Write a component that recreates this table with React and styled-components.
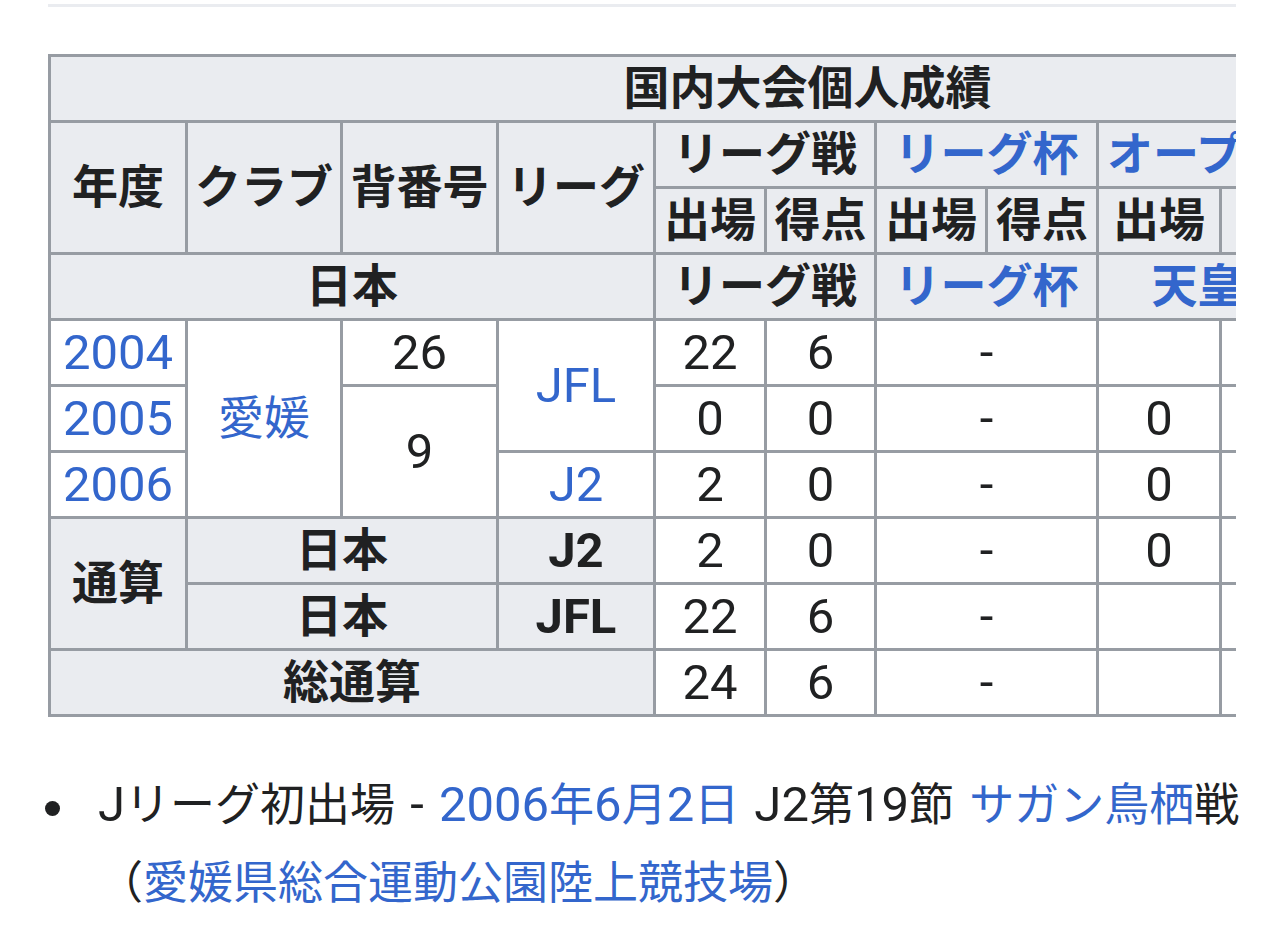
import React from "react";
import styled, { createGlobalStyle } from "styled-components";

const Global = createGlobalStyle`
  html, body { margin: 0; padding: 0; background: #ffffff; }
  body {
    font-family: Roboto, "Noto Sans CJK JP", sans-serif;
    color: #202122;
  }
`;

const Page = styled.div`
  padding: 4px 48px 0;
`;

const Rule = styled.div`
  height: 3px;
  background: #eaecf0;
`;

const Scroller = styled.div`
  margin-top: 47px;
  overflow: hidden;
`;

const Table = styled.table`
  border-collapse: collapse;
  table-layout: fixed;
  width: 1519px;
  font-size: 46px;
  color: #202122;
`;

const cellBase = `
  border: 3px solid #979ca3;
  padding: 3px 0;
  line-height: 57px;
  text-align: center;
  vertical-align: middle;
  white-space: nowrap;
  overflow: hidden;
`;

const Th = styled.th`
  ${cellBase}
  background: #eaecf0;
  font-weight: 700;
  font-size: ${(p) => (p.$latin ? "49px" : "46px")};
`;

const Td = styled.td`
  ${cellBase}
  background: #ffffff;
  font-weight: 400;
  font-size: ${(p) => (p.$latin ? "49px" : "46px")};
`;

const Link = styled.a`
  color: #3366cc;
  text-decoration: none;
`;

const List = styled.ul`
  list-style: none;
  margin: 49px 0 0;
  padding: 0;
`;

const Item = styled.li`
  display: flex;
  align-items: flex-start;
  gap: 38px;
  font-size: 45px;
  line-height: 78px;
`;

const Dot = styled.span`
  flex: none;
  width: 15px;
  height: 15px;
  margin-top: 35px;
  margin-left: -3px;
  border-radius: 50%;
  background: #202122;
`;

const ItemText = styled.div`
  white-space: nowrap;
`;

const Latin = styled.span`
  font-size: 49px;
  word-spacing: 3px;
`;

const widths = [137, 155, 156, 157, 111, 110, 111, 111, 123, 123, 111, 111];

const pairs = ["出場", "得点", "出場", "得点", "出場", "得点", "出場", "得点"];

export default function App() {
  return (
    <>
      <Global />
      <Page>
        <Rule />
        <Scroller>
          <Table>
            <colgroup>
              {widths.map((w, i) => (
                <col key={i} style={{ width: w }} />
              ))}
            </colgroup>
            <tbody>
              <tr>
                <Th colSpan={12}>国内大会個人成績</Th>
              </tr>
              <tr>
                <Th rowSpan={2}>年度</Th>
                <Th rowSpan={2}>クラブ</Th>
                <Th rowSpan={2}>背番号</Th>
                <Th rowSpan={2}>リーグ</Th>
                <Th colSpan={2}>リーグ戦</Th>
                <Th colSpan={2}>
                  <Link href="#">リーグ杯</Link>
                </Th>
                <Th colSpan={2}>
                  <Link href="#">オープン杯</Link>
                </Th>
                <Th colSpan={2}>期間通算</Th>
              </tr>
              <tr>
                {pairs.map((p, i) => (
                  <Th key={i}>{p}</Th>
                ))}
              </tr>
              <tr>
                <Th colSpan={4}>日本</Th>
                <Th colSpan={2}>リーグ戦</Th>
                <Th colSpan={2}>
                  <Link href="#">リーグ杯</Link>
                </Th>
                <Th colSpan={2}>
                  <Link href="#">天皇杯</Link>
                </Th>
                <Th colSpan={2}>期間通算</Th>
              </tr>
              <tr>
                <Td $latin>
                  <Link href="#">2004</Link>
                </Td>
                <Td rowSpan={3}>
                  <Link href="#">愛媛</Link>
                </Td>
                <Td $latin>26</Td>
                <Td $latin rowSpan={2}>
                  <Link href="#">JFL</Link>
                </Td>
                <Td $latin>22</Td>
                <Td $latin>6</Td>
                <Td $latin colSpan={2}>-</Td>
                <Td $latin></Td>
                <Td $latin></Td>
                <Td $latin>22</Td>
                <Td $latin>6</Td>
              </tr>
              <tr>
                <Td $latin>
                  <Link href="#">2005</Link>
                </Td>
                <Td $latin rowSpan={2}>9</Td>
                <Td $latin>0</Td>
                <Td $latin>0</Td>
                <Td $latin colSpan={2}>-</Td>
                <Td $latin>0</Td>
                <Td $latin>0</Td>
                <Td $latin>0</Td>
                <Td $latin>0</Td>
              </tr>
              <tr>
                <Td $latin>
                  <Link href="#">2006</Link>
                </Td>
                <Td $latin>
                  <Link href="#">J2</Link>
                </Td>
                <Td $latin>2</Td>
                <Td $latin>0</Td>
                <Td $latin colSpan={2}>-</Td>
                <Td $latin>0</Td>
                <Td $latin>0</Td>
                <Td $latin>2</Td>
                <Td $latin>0</Td>
              </tr>
              <tr>
                <Th rowSpan={2}>通算</Th>
                <Th colSpan={2}>日本</Th>
                <Th $latin>J2</Th>
                <Td $latin>2</Td>
                <Td $latin>0</Td>
                <Td $latin colSpan={2}>-</Td>
                <Td $latin>0</Td>
                <Td $latin>0</Td>
                <Td $latin>2</Td>
                <Td $latin>0</Td>
              </tr>
              <tr>
                <Th colSpan={2}>日本</Th>
                <Th $latin>JFL</Th>
                <Td $latin>22</Td>
                <Td $latin>6</Td>
                <Td $latin colSpan={2}>-</Td>
                <Td $latin></Td>
                <Td $latin></Td>
                <Td $latin>22</Td>
                <Td $latin>6</Td>
              </tr>
              <tr>
                <Th colSpan={4}>総通算</Th>
                <Td $latin>24</Td>
                <Td $latin>6</Td>
                <Td $latin colSpan={2}>-</Td>
                <Td $latin></Td>
                <Td $latin></Td>
                <Td $latin>24</Td>
                <Td $latin>6</Td>
              </tr>
            </tbody>
          </Table>
        </Scroller>
        <List>
          <Item>
            <Dot />
            <ItemText>
              <Latin>J</Latin>リーグ初出場<Latin> - </Latin>
              <Link href="#">
                <Latin>2006</Latin>年<Latin>6</Latin>月<Latin>2</Latin>日
              </Link>
              <Latin> J2</Latin>第<Latin>19</Latin>節<Latin> </Latin>
              <Link href="#">サガン鳥栖</Link>戦
              <br />（<Link href="#">愛媛県総合運動公園陸上競技場</Link>）
            </ItemText>
          </Item>
        </List>
      </Page>
    </>
  );
}
